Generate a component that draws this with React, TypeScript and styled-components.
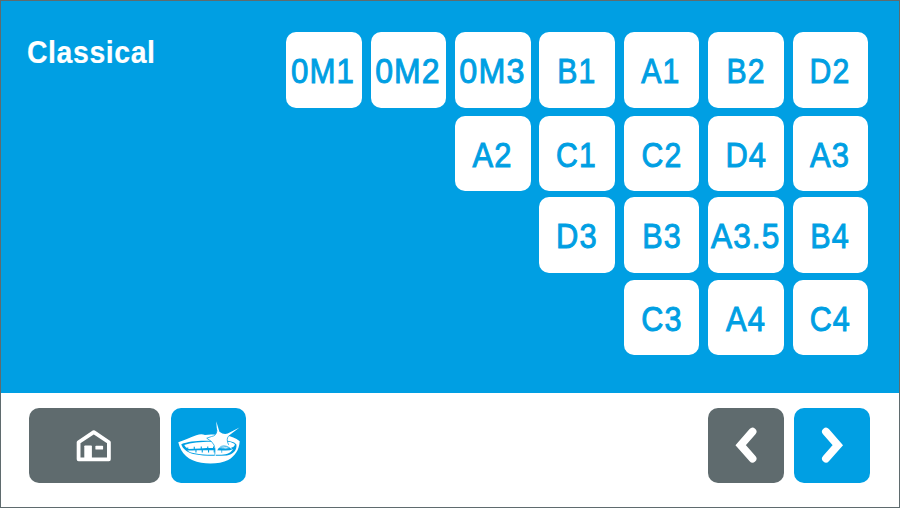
import React from "react";
import styled, { createGlobalStyle } from "styled-components";

const BLUE = "#009fe3";
const SLATE = "#5f6b6e";

const GlobalStyle = createGlobalStyle`
  *, *::before, *::after { box-sizing: border-box; }
  body { margin: 0; background: #fff; font-family: "Liberation Sans", Arial, sans-serif; }
  button { font: inherit; border: 0; padding: 0; margin: 0; }
`;

const Screen = styled.div`
  width: 900px;
  height: 508px;
  display: flex;
  flex-direction: column;
  border: 1px solid ${SLATE};
  background: #fff;
  overflow: hidden;
`;

const ShadePanel = styled.main`
  flex: 0 0 392px;
  display: flex;
  justify-content: space-between;
  align-items: flex-start;
  padding: 31.3px 31px 0 26px;
  background: ${BLUE};
`;

const Title = styled.h1`
  margin: 1px 0 0;
  font-size: 31.5px;
  line-height: 38px;
  font-weight: 700;
  letter-spacing: 0.7px;
  color: #fff;
  -webkit-text-stroke: 0.2px #fff;
  transform: scaleX(0.9);
  transform-origin: left;
`;

const ShadeRows = styled.div`
  display: flex;
  flex-direction: column;
`;

const ShadeRow = styled.div<{ $gap: number }>`
  display: flex;
  justify-content: flex-end;
  gap: 8.85px;
  margin-bottom: ${(p) => p.$gap}px;
`;

const ShadeTile = styled.button`
  width: 75.5px;
  height: 75.5px;
  display: flex;
  justify-content: center;
  align-items: center;
  border-radius: 10px;
  background: #fff;
  color: ${BLUE};
`;

const ShadeLabel = styled.span<{ $stretch: number; $shift: number; $drop: number }>`
  font-size: 35.5px;
  line-height: 40px;
  letter-spacing: 1.3px;
  white-space: nowrap;
  -webkit-text-stroke: 1px ${BLUE};
  transform: translate(${(p) => p.$shift}px, ${(p) => p.$drop}px) scaleX(${(p) => p.$stretch});
`;

const Toolbar = styled.footer`
  flex: 1;
  display: flex;
  align-items: flex-start;
  gap: 10.2px;
  padding: 14.7px 29.5px 0 27.7px;
`;

const Spacer = styled.div`
  flex: 1;
`;

const ToolButton = styled.button<{ $tone: string; $wide?: boolean }>`
  width: ${(p) => (p.$wide ? 131.7 : 75.6)}px;
  height: 75.7px;
  border-radius: 10px;
  background: ${(p) => p.$tone};
  svg { display: block; width: 100%; height: 100%; }
`;

type Shade = [label: string, stretch: number, shift: number];

const rows: { gap: number; drop: number; shades: Shade[] }[] = [
  {
    gap: 7.8,
    drop: 1,
    shades: [
      ["0M1", 0.88, -1.5], ["0M2", 0.9, -0.5], ["0M3", 0.91, 0],
      ["B1", 0.85, -0.3], ["A1", 0.85, -1.2], ["B2", 0.85, 0], ["D2", 0.85, 0],
    ],
  },
  {
    gap: 6.3,
    drop: 2,
    shades: [["A2", 0.87, -0.5], ["C1", 0.85, -0.5], ["C2", 0.85, 0], ["D4", 0.87, 0.3], ["A3", 0.87, 0]],
  },
  { gap: 6.8, drop: 1, shades: [["D3", 0.87, 0], ["B3", 0.86, 0], ["A3.5", 0.89, -0.4], ["B4", 0.86, 0]] },
  { gap: 0, drop: 2, shades: [["C3", 0.86, 0], ["A4", 0.87, 0], ["C4", 0.86, 0.3]] },
];

const HouseIcon = () => (
  <svg viewBox="28.9 407.7 131.7 75.7" fill="none" stroke="#fff">
    <path d="M78.5 459V442L93.7 431.8L108.8 442V459Z" strokeWidth="3.8" strokeLinejoin="round" />
    <path d="M84.2 446Q84.2 445.2 85 445.2H91Q91.8 445.2 91.8 446V459H84.2Z" fill="#fff" stroke="none" />
    <rect x="95.3" y="445.5" width="7.7" height="3.8" rx="0.7" fill="#fff" stroke="none" />
  </svg>
);

const SmileIcon = () => (
  <svg viewBox="170.7 408.2 75.7 75.7">
    <path
      d="M178 442.4C183 441.1 190 437.6 196 435.5C199.5 434.2 202 433.9 204.7 435.2C207 434.8 210 434.5 213 434.7L226 435.7C231 436.3 235.5 438.2 239.5 441.5C239 450 235 456.4 228 460.2C221 463.8 210 464.6 201 463C188.5 460.8 180.5 454 178 442.4Z"
      fill="#fff"
    />
    <path
      d="M181 444.4C189 441 202 440.4 214 441.3C223 440.1 233 440.6 236.2 444.6C237 450.2 232.8 454.6 226.5 455.6C216 456.4 202 456.2 193 454.2C186 452.3 182.5 448.9 181 444.4Z"
      fill={BLUE}
    />
    <path d="M184 445.2C192 442.2 205 441.6 217 442C225 441.3 231 441.4 234.6 444.3C234.8 447.7 230 449 222 448.5C210 447.6 199 448.7 188 449.2C186.2 448 184.8 446.8 184 445.2Z" fill="#fff" />
    <path d="M187 450.6C198 450.4 211 450.2 223 450.6Q229 451.2 233 449.2C230 454 225 454.9 219 455C207 455.3 195 454.3 189.8 452.4Z" fill="#fff" />
    <path
      d="M187.5 447.6V450.2M194 447V449.9M201 446.7V449.2M207.5 446.7V449.2M213.3 446.7V449.2M195.7 450V452.6M202 449.8V452.6M208.3 449.8V452.6M214 450V452.6"
      stroke={BLUE}
      strokeWidth="1.1"
    />
    <path d="M218.2 450.2C220 446.6 228.5 446 231.7 449M221.5 449V453" fill="none" stroke={BLUE} strokeWidth="0.7" />
    <path
      d="M216 421.5L219.2 431.9Q223.5 435.2 227.5 433.7L239.3 427.8L228.4 435.9Q225.6 439.2 228.4 444.1L231.8 449.2L226.2 446.5Q220.4 444.8 217.2 450.2L214.4 459L214.8 449.3Q214.6 445 211.2 441.7L206.5 438.4L211.3 436.7Q216.1 436.1 216.7 430.8Z"
      fill="#fff"
    />
    <path d="M216 428.5L216.7 431Q216.1 436.1 211.3 436.7L206.5 438.4L211.2 441.7Q214.6 445 214.8 449.3L214.6 455M218 450Q220.4 444.8 226.2 446.5L229.5 448M228.4 445Q225.6 439.2 228.4 436.3" fill="none" stroke={BLUE} strokeWidth="0.75" />
  </svg>
);

const ChevronIcon = ({ points }: { points: string }) => (
  <svg viewBox="0 0 75.7 75.7">
    <polyline points={points} fill="none" stroke="#fff" strokeWidth="7.8" strokeLinecap="round" strokeLinejoin="miter" />
  </svg>
);

export default function App() {
  return (
    <>
      <GlobalStyle />
      <Screen>
        <ShadePanel>
          <Title>Classical</Title>
          <ShadeRows>
            {rows.map((row, i) => (
              <ShadeRow key={i} $gap={row.gap}>
                {row.shades.map(([label, stretch, shift]) => (
                  <ShadeTile key={label}>
                    <ShadeLabel $stretch={stretch} $shift={shift} $drop={row.drop}>{label}</ShadeLabel>
                  </ShadeTile>
                ))}
              </ShadeRow>
            ))}
          </ShadeRows>
        </ShadePanel>
        <Toolbar>
          <ToolButton $tone={SLATE} $wide aria-label="Home"><HouseIcon /></ToolButton>
          <ToolButton $tone={BLUE} aria-label="Bleaching shades"><SmileIcon /></ToolButton>
          <Spacer />
          <ToolButton $tone={SLATE} aria-label="Previous"><ChevronIcon points="44.6,23.6 32.7,37.2 44.6,50.6" /></ToolButton>
          <ToolButton $tone={BLUE} aria-label="Next"><ChevronIcon points="32,23.6 43.9,37.2 32,50.6" /></ToolButton>
        </Toolbar>
      </Screen>
    </>
  );
}
